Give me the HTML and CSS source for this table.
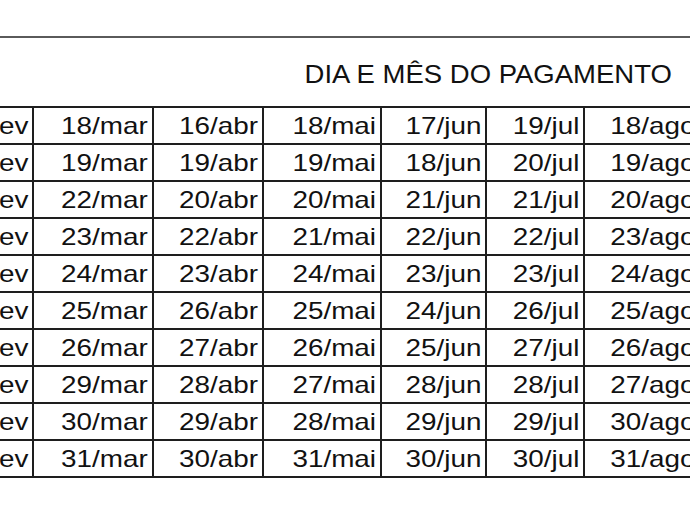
FILE: index.html
```html
<!DOCTYPE html>
<html lang="pt">
<head>
<meta charset="utf-8">
<title>Dia e mês do pagamento</title>
<link rel="stylesheet" href="styles.css">
</head>
<body>
<div class="page">
  <div class="topline"></div>
  <div class="title"><span class="stretch">DIA E MÊS DO PAGAMENTO</span></div>
  <table class="grid">
    <colgroup>
      <col class="c0"><col class="c1"><col class="c2"><col class="c3"><col class="c4"><col class="c5"><col class="c6">
    </colgroup>
    <tbody>
      <tr><td><span class="stretch">15/fev</span></td><td><span class="stretch">18/mar</span></td><td><span class="stretch">16/abr</span></td><td><span class="stretch">18/mai</span></td><td><span class="stretch">17/jun</span></td><td><span class="stretch">19/jul</span></td><td><span class="stretch">18/ago</span></td></tr>
      <tr><td><span class="stretch">16/fev</span></td><td><span class="stretch">19/mar</span></td><td><span class="stretch">19/abr</span></td><td><span class="stretch">19/mai</span></td><td><span class="stretch">18/jun</span></td><td><span class="stretch">20/jul</span></td><td><span class="stretch">19/ago</span></td></tr>
      <tr><td><span class="stretch">17/fev</span></td><td><span class="stretch">22/mar</span></td><td><span class="stretch">20/abr</span></td><td><span class="stretch">20/mai</span></td><td><span class="stretch">21/jun</span></td><td><span class="stretch">21/jul</span></td><td><span class="stretch">20/ago</span></td></tr>
      <tr><td><span class="stretch">18/fev</span></td><td><span class="stretch">23/mar</span></td><td><span class="stretch">22/abr</span></td><td><span class="stretch">21/mai</span></td><td><span class="stretch">22/jun</span></td><td><span class="stretch">22/jul</span></td><td><span class="stretch">23/ago</span></td></tr>
      <tr><td><span class="stretch">19/fev</span></td><td><span class="stretch">24/mar</span></td><td><span class="stretch">23/abr</span></td><td><span class="stretch">24/mai</span></td><td><span class="stretch">23/jun</span></td><td><span class="stretch">23/jul</span></td><td><span class="stretch">24/ago</span></td></tr>
      <tr><td><span class="stretch">22/fev</span></td><td><span class="stretch">25/mar</span></td><td><span class="stretch">26/abr</span></td><td><span class="stretch">25/mai</span></td><td><span class="stretch">24/jun</span></td><td><span class="stretch">26/jul</span></td><td><span class="stretch">25/ago</span></td></tr>
      <tr><td><span class="stretch">23/fev</span></td><td><span class="stretch">26/mar</span></td><td><span class="stretch">27/abr</span></td><td><span class="stretch">26/mai</span></td><td><span class="stretch">25/jun</span></td><td><span class="stretch">27/jul</span></td><td><span class="stretch">26/ago</span></td></tr>
      <tr><td><span class="stretch">24/fev</span></td><td><span class="stretch">29/mar</span></td><td><span class="stretch">28/abr</span></td><td><span class="stretch">27/mai</span></td><td><span class="stretch">28/jun</span></td><td><span class="stretch">28/jul</span></td><td><span class="stretch">27/ago</span></td></tr>
      <tr><td><span class="stretch">25/fev</span></td><td><span class="stretch">30/mar</span></td><td><span class="stretch">29/abr</span></td><td><span class="stretch">28/mai</span></td><td><span class="stretch">29/jun</span></td><td><span class="stretch">29/jul</span></td><td><span class="stretch">30/ago</span></td></tr>
      <tr><td><span class="stretch">26/fev</span></td><td><span class="stretch">31/mar</span></td><td><span class="stretch">30/abr</span></td><td><span class="stretch">31/mai</span></td><td><span class="stretch">30/jun</span></td><td><span class="stretch">30/jul</span></td><td><span class="stretch">31/ago</span></td></tr>
    </tbody>
  </table>
</div>
</body>
</html>
```

FILE: styles.css
```css
html, body {
  margin: 0;
  padding: 0;
  background: #ffffff;
}

.page {
  width: 690px;
  height: 514px;
  overflow: hidden;
  font-family: "Liberation Sans", Arial, sans-serif;
  color: #111111;
  padding-top: 36px;
  box-sizing: border-box;
}

.topline {
  height: 2px;
  background: #5a5a5a;
  width: 100%;
}

.title {
  height: 68px;
  display: flex;
  justify-content: flex-end;
  align-items: flex-end;
  padding-right: 18px;
  padding-bottom: 19px;
  box-sizing: border-box;
  font-size: 25px;
  line-height: 25px;
}

.stretch {
  display: inline-block;
  transform: scaleX(1.1);
  transform-origin: right center;
  white-space: nowrap;
}

.grid {
  border-collapse: collapse;
  table-layout: fixed;
  margin-left: -69px;
  width: 768px;
  font-size: 24px;
}

.grid .c0 { width: 101px; }
.grid .c1 { width: 120px; }
.grid .c2 { width: 110px; }
.grid .c3 { width: 118px; }
.grid .c4 { width: 105px; }
.grid .c5 { width: 98px; }
.grid .c6 { width: 116px; }

.grid td {
  border: 2px solid #1e1e1e;
  height: 35px;
  padding: 0 4px 0 0;
  text-align: right;
  vertical-align: middle;
  line-height: 24px;
  white-space: nowrap;
  overflow: hidden;
}

.grid td .stretch {
  transform: scaleX(1.16);
}
```
